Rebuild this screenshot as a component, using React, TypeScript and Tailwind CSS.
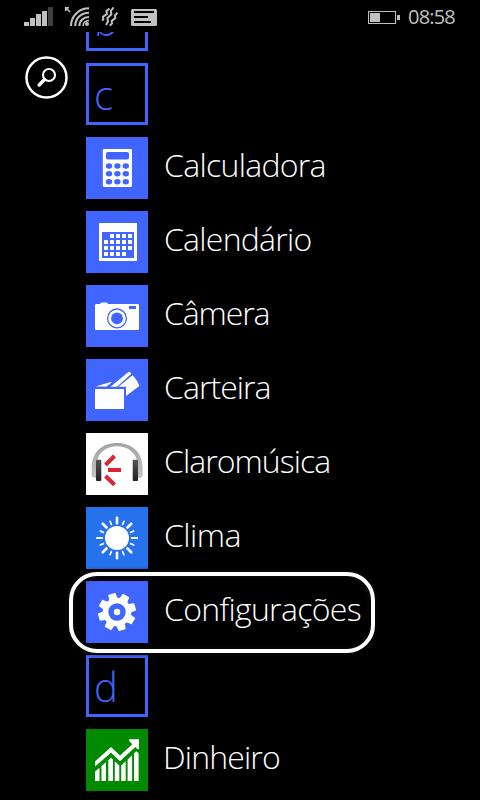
import type { ReactNode } from "react";

const FONT = "font-['Open_Sans','Noto_Sans',sans-serif]";

function Icon({ children }: { children: ReactNode }) {
  return (
    <svg viewBox="0 0 62 62" className="block size-[62px]">
      {children}
    </svg>
  );
}

function CalculatorIcon() {
  return (
    <Icon>
      <rect x="16.8" y="12" width="29.2" height="38" rx="1.2" fill="#fff" />
      <rect x="20" y="15" width="23" height="7.5" rx="1.8" fill="#4066ff" />
      {[29, 36.8, 44.8].map((y) =>
        [23, 31.4, 39.8].map((x) => <ellipse key={`${x}-${y}`} cx={x} cy={y} rx="3.2" ry="2.7" fill="#4066ff" />)
      )}
    </Icon>
  );
}

function CalendarIcon() {
  return (
    <Icon>
      <rect x="13" y="12" width="38" height="38" rx="0.8" fill="#fff" />
      <rect x="16" y="21" width="32" height="26" fill="#4066ff" />
      {[0, 1, 2, 3].map((r) =>
        [0, 1, 2, 3, 4].map((c) =>
          (r === 0 && c === 0) || (r === 3 && c === 4) ? null : (
            <rect key={`${r}-${c}`} x={18 + c * 6} y={23 + r * 6} width="4" height="4" fill="#fff" />
          )
        )
      )}
    </Icon>
  );
}

function CameraIcon() {
  return (
    <Icon>
      <path d="M10 19h4l1.4-1.6h5.4L22 19h30q1 0 1 1v24q0 1-1 1H10q-1 0-1-1V20q0-1 1-1Z" fill="#fff" />
      <rect x="43" y="21" width="7" height="3" fill="#4066ff" />
      <circle cx="31" cy="33.4" r="9.4" fill="#fff" stroke="#4066ff" strokeWidth="1.3" />
      <circle cx="31" cy="33.4" r="5.9" fill="#4066ff" />
    </Icon>
  );
}

function WalletIcon() {
  return (
    <Icon>
      <g fill="#fff">
        <rect x="9" y="30" width="29" height="20" rx="0.5" />
        <path d="M9.5 27.4 24 23.3h2L20.5 27.4Z" />
        <path d="M24.5 27.7 42.5 13q.8-.5 1.4.1l1.500 1.600L31 27.700Z" />
        <path d="M32.500 27.700 46.500 16.200 48 17.800q3.200 3.800 5.200 8.400.2.7-.5 1.200L40 37V27.700Z" />
      </g>
    </Icon>
  );
}

function HeadphonesIcon() {
  return (
    <Icon>
      <defs>
        <linearGradient id="band" x1="0" y1="0" x2="0" y2="1">
          <stop offset="0" stopColor="#a3a3a3" />
          <stop offset="1" stopColor="#c4c4c4" />
        </linearGradient>
        <linearGradient id="pad" x1="0" y1="0" x2="0" y2="1">
          <stop offset="0" stopColor="#555" />
          <stop offset="1" stopColor="#202020" />
        </linearGradient>
      </defs>
      <path d="M5.7 43V34C6 19 16 10 31 10s25 9 25.6 24v9q-1.5 2.3-5 2.4V30C50 19.5 42 13.2 31 13.2S12 19.5 11 30v15.3q-4-.3-5.3-2.3Z" fill="url(#band)" />
      <rect x="10" y="26.7" width="5.3" height="21.3" rx="1" fill="url(#pad)" />
      <rect x="46.7" y="26.7" width="5.3" height="21.3" rx="1" fill="url(#pad)" />
      <path d="M19.5 32 28.5 23M22 37H35M19.5 43l9 8.8" fill="none" stroke="#df2334" strokeWidth="4" />
    </Icon>
  );
}

function SunIcon() {
  return (
    <Icon>
      <circle cx="31" cy="31" r="12" fill="#fff" />
      {Array.from({ length: 16 }, (_, i) => (
        <path
          key={i}
          d={i % 2 ? "M31 16.3v-3.4" : "M31 16.2V10.8"}
          stroke="#fff"
          strokeWidth={i % 2 ? 1.7 : i % 8 === 4 ? 1.9 : 2.6}
          strokeLinecap="round"
          transform={`rotate(${i * 22.5} 31 31)`}
        />
      ))}
    </Icon>
  );
}

function GearIcon() {
  return (
    <Icon>
      <circle cx="31" cy="31" r="14.3" fill="#fff" />
      {Array.from({ length: 8 }, (_, i) => (
        <path
          key={i}
          d="M26.5 19 27.3 12.6q.1-.5.6-.5h6.2q.5 0 .6.5L35.5 19Z"
          fill="#fff"
          transform={`rotate(${i * 45 - 16} 31 31)`}
        />
      ))}
      <circle cx="31" cy="31" r="8.7" fill="#4066ff" />
      <circle cx="31" cy="31" r="3.2" fill="#fff" />
    </Icon>
  );
}

function ChartIcon() {
  return (
    <Icon>
      <g fill="#fff">
        <path d="M9 32.5 25 18l9 8.5L46.3 15.2 43 11.8V10.3H53V20L51.5 20.3 49.3 18 34 32.3 25 23.8 9 37.5Z" />
        <path d="M9 42.5 13.5 38.7V52H9ZM15.5 37 20 33.2V52H15.500ZM22.300 31.200 25 28.800 27 30.500V52H22.300ZM28.800 32.300 33.300 36.500V52H28.800ZM35.200 36.500 39.700 32.300V52H35.200ZM41.600 30.500 46.100 26.300V52H41.600ZM48 24.500 50.200 22.300 52.600 24.300V52H48Z" />
      </g>
    </Icon>
  );
}

function LetterTile({ letter }: { letter: string }) {
  return (
    <div className="flex size-[62px] shrink-0 items-end border-[3px] border-[#4066ff] pb-[2px] pl-[5px] text-[40px] leading-[50px] font-[360] text-[#4066ff]">
      <span className="block">{letter}</span>
    </div>
  );
}

interface App {
  name: string;
  tile: string;
  spacing: string;
  icon: ReactNode;
}

function AppRow({ name, tile, spacing, icon }: App) {
  return (
    <div className="flex h-[62px] shrink-0 items-center">
      <div className={`size-[62px] shrink-0 ${tile}`}>{icon}</div>
      <span className={`pb-[7px] text-[32px] leading-10 font-[340] whitespace-nowrap text-white ${spacing}`}>{name}</span>
    </div>
  );
}

const apps: App[] = [
  { name: "Calculadora", tile: "bg-[#4066ff]", spacing: "pl-4 tracking-[-0.7px]", icon: <CalculatorIcon /> },
  { name: "Calendário", tile: "bg-[#4066ff]", spacing: "pl-4 tracking-[-0.75px]", icon: <CalendarIcon /> },
  { name: "Câmera", tile: "bg-[#4066ff]", spacing: "pl-4 tracking-[-1.1px]", icon: <CameraIcon /> },
  { name: "Carteira", tile: "bg-[#4066ff]", spacing: "pl-4 tracking-[-0.95px]", icon: <WalletIcon /> },
  { name: "Claromúsica", tile: "bg-white", spacing: "pl-4 tracking-[-0.95px]", icon: <HeadphonesIcon /> },
  { name: "Clima", tile: "bg-[#2672ec]", spacing: "pl-4 tracking-[-0.5px]", icon: <SunIcon /> },
  { name: "Configurações", tile: "bg-[#4066ff]", spacing: "pl-4 tracking-[-0.68px]", icon: <GearIcon /> },
];

function StatusBar() {
  return (
    <header className="flex h-8 shrink-0 items-start text-[#c1c1c1]">
      <svg viewBox="0 0 160 32" className="h-8 w-40" fill="currentColor">
        <path d="M24 22h5v4h-5ZM30 18h5v8h-5ZM36 14h5v12h-5ZM42 11h5v15h-5Z" />
        <path d="M48 7h5v19h-5Z" fill="#404040" />
        <g fill="none" stroke="currentColor" strokeWidth="2.1">
          <path d="M71 26C71 16 79 8.3 89 8.3M75.2 26C75.2 18.5 81 12.7 89 12.7M79.4 26C79.4 20.7 83.5 17 89 17" />
          <path d="M83 26C83.2 23 85.5 20.8 89 20.6" strokeWidth="1.5" />
          <path d="M66 8l4 4M65.7 11V7.7H69" strokeWidth="1.6" />
        </g>
        <circle cx="87" cy="24" r="2" />
        <g fill="none" stroke="currentColor" strokeWidth="2">
          <path d="M109.500 8.500 106.500 11 106.900 14 103 16.800 103.300 19.500 102 20.500" />
          <path d="M113.600 7.300 110.800 11 111.400 14.300 107.400 18 108 21.500 106 25" />
          <path d="M117.500 12.700 115 15.500 115.300 18 111.700 21 112 23.500 109.800 25.700" />
        </g>
        <rect x="131" y="9" width="26" height="17" rx="1.5" />
        <path d="M134 11h20v2h-20ZM134 16h14v2h-14ZM134 21h17v2h-17Z" fill="#000" />
      </svg>
      <svg viewBox="0 0 33 32" className="ml-auto h-8 w-[33px]" fill="currentColor">
        <rect x="0.5" y="11.5" width="27" height="12" fill="none" stroke="currentColor" />
        <path d="M2 13h10v9H2ZM29 15h3v5h-3Z" />
      </svg>
      <time className="mr-6 ml-[7px] w-[48px] pt-[5px] text-[20px] leading-6 tracking-[-0.8px] whitespace-nowrap">08:58</time>
    </header>
  );
}

export default function App() {
  return (
    <div className={`relative flex h-[800px] w-[480px] flex-col overflow-hidden bg-black ${FONT}`}>
      <StatusBar />
      <div className="flex min-h-0 flex-1 overflow-hidden">
        <button aria-label="Pesquisar" className="mt-6 ml-6 size-[44px] shrink-0">
          <svg viewBox="0 0 44 44" className="size-[44px]" fill="none" stroke="#fff">
            <circle cx="22.5" cy="21.5" r="20" strokeWidth="2.5" />
            <circle cx="25" cy="19" r="6" strokeWidth="2.1" />
            <path d="m20.5 23.5-5.3 5.5" strokeWidth="3.5" strokeLinecap="round" />
          </svg>
        </button>
        <main className="-mt-[43px] ml-[18px] flex flex-col gap-3">
          <LetterTile letter="b" />
          <LetterTile letter="c" />
          {apps.map((app) => (
            <AppRow key={app.name} {...app} />
          ))}
          <LetterTile letter="d" />
          <AppRow name="Dinheiro" tile="bg-[#008a00]" spacing="pl-[15px] tracking-[-0.85px]" icon={<ChartIcon />} />
        </main>
      </div>
      <div className="absolute top-[572px] left-[69px] h-[81px] w-[306px] rounded-[28px] border-4 border-white shadow-[0_0_5px_1px_rgba(15,15,15,0.85),inset_0_0_5px_1px_rgba(15,15,15,0.85)]" />
    </div>
  );
}
